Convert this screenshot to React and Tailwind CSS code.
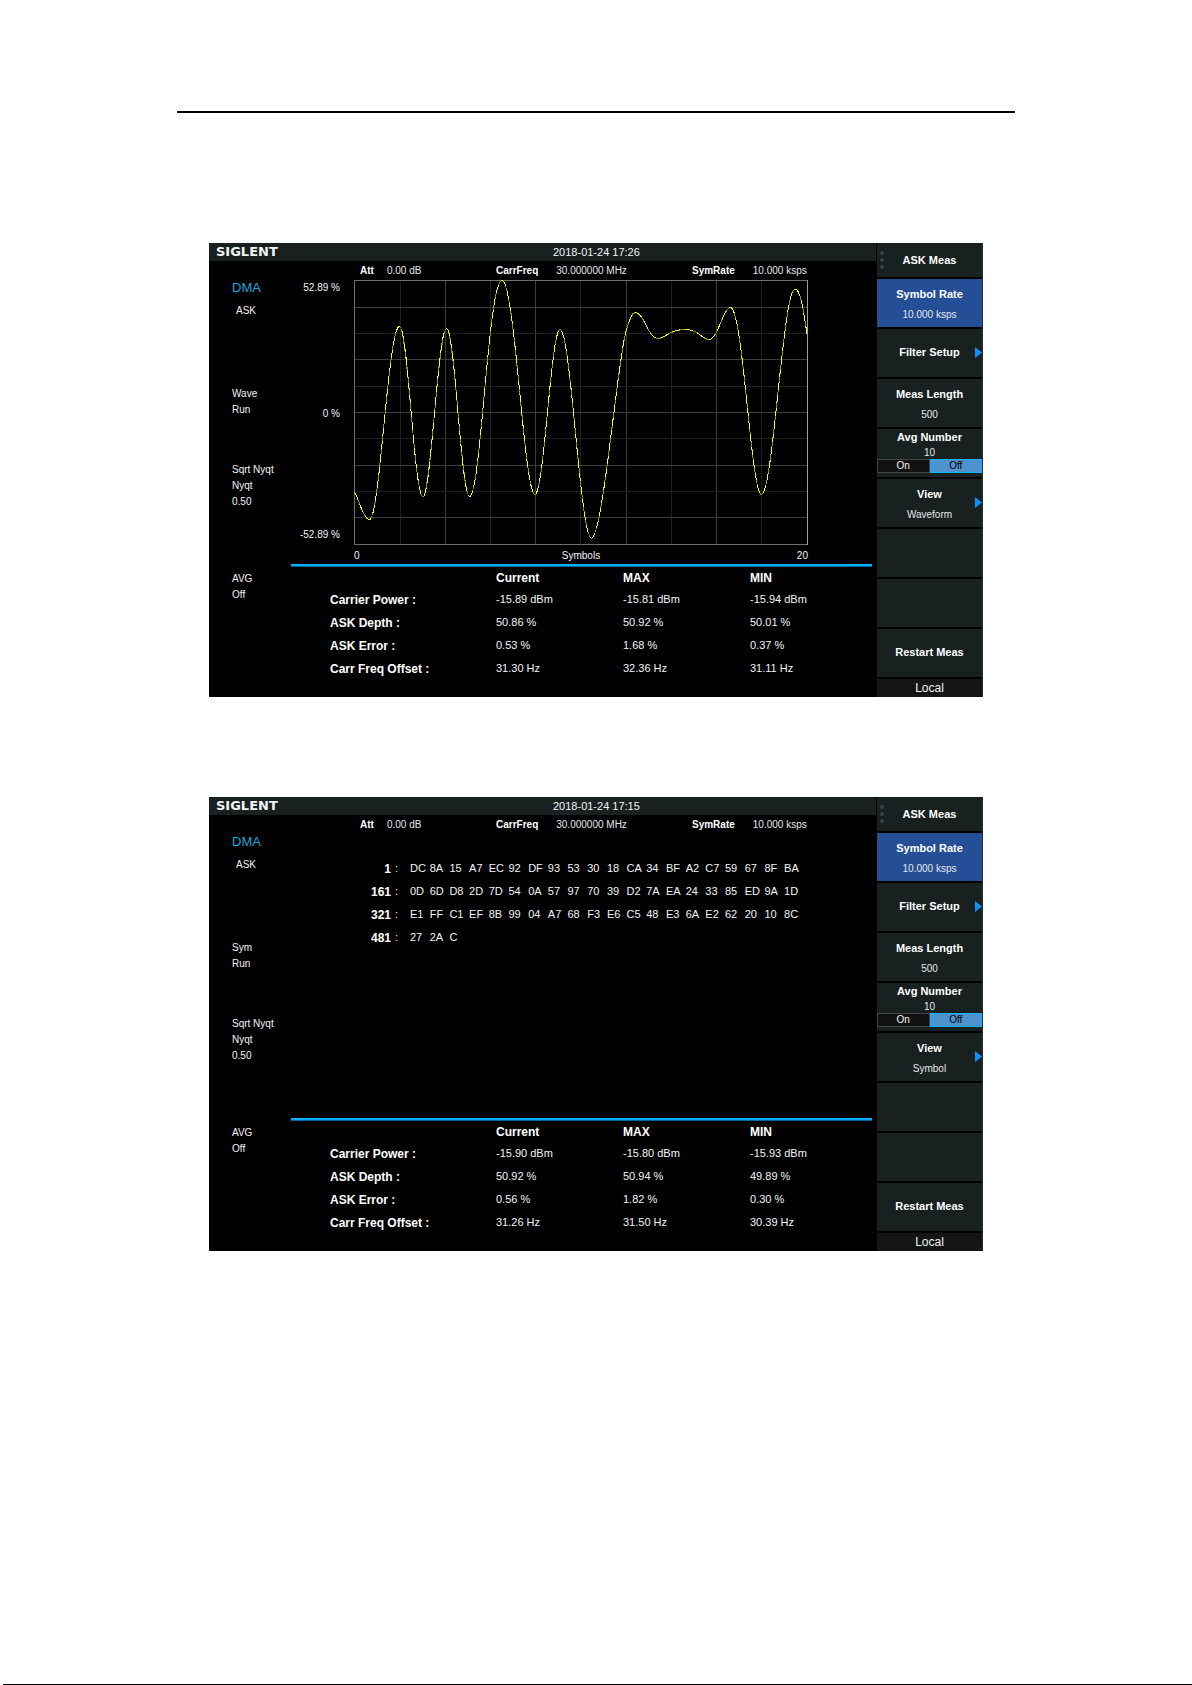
const WAVE =
  "M0.5 212.5 C5 218 9 239.5 15.5 239.5 C26 239.5 34 46.5 45.5 46.5 C54 46.5 60 216.5 69 216.5 C77 216.5 84 48.5 92.5 48.5 C101 48.5 107 216.5 115.5 216.5 C127 216.5 134 0.5 148 0.5 C161 0.5 170 214.5 181 214.5 C190 214.5 197 49.5 206 49.5 C217 49.5 226 258 237.5 258 C249 258 264 72 273 48 C276 38 278 32.5 281.5 32.5 C290 32.5 294 58.5 304 58.5 C311 58.5 315 49.5 331 49.5 C346 49.5 347 59.5 355 59.5 C364 59.5 369 27.5 376.5 27.5 C389 27.5 397 214.5 407.5 214.5 C419 214.5 429 9 441 9 C446 9 449 27 453 54";

const GRID_X = [46, 91, 136, 181, 226, 272, 317, 362, 407];
const GRID_Y = [27, 53, 79, 106, 132, 158, 185, 211, 237];

const CAPTURES = [
  {
    id: "waveform",
    time: "2018-01-24 17:26",
    mode: "Wave",
    view: "Waveform",
    rows: [
      ["Carrier Power :", "-15.89 dBm", "-15.81 dBm", "-15.94 dBm"],
      ["ASK Depth :", "50.86 %", "50.92 %", "50.01 %"],
      ["ASK Error :", "0.53 %", "1.68 %", "0.37 %"],
      ["Carr Freq Offset :", "31.30 Hz", "32.36 Hz", "31.11 Hz"],
    ],
  },
  {
    id: "symbol",
    time: "2018-01-24 17:15",
    mode: "Sym",
    view: "Symbol",
    rows: [
      ["Carrier Power :", "-15.90 dBm", "-15.80 dBm", "-15.93 dBm"],
      ["ASK Depth :", "50.92 %", "50.94 %", "49.89 %"],
      ["ASK Error :", "0.56 %", "1.82 %", "0.30 %"],
      ["Carr Freq Offset :", "31.26 Hz", "31.50 Hz", "30.39 Hz"],
    ],
  },
];

const SYMBOLS = [
  ["1", "DC 8A 15 A7 EC 92 DF 93 53 30 18 CA 34 BF A2 C7 59 67 8F BA"],
  ["161", "0D 6D D8 2D 7D 54 0A 57 97 70 39 D2 7A EA 24 33 85 ED 9A 1D"],
  ["321", "E1 FF C1 EF 8B 99 04 A7 68 F3 E6 C5 48 E3 6A E2 62 20 10 8C"],
  ["481", "27 2A C"],
];

function Status({ mode }) {
  return (
    <div className="flex w-[82px] shrink-0 flex-col pt-[19px] pl-[23px] text-[10px] leading-4 whitespace-nowrap text-gray-100">
      <p className="text-[13px] text-[#1ba6dc]">DMA</p>
      <p className="mt-[7px] pl-1">ASK</p>
      <div className="mt-[67px]">
        <p>{mode}</p>
        <p>Run</p>
      </div>
      <div className="mt-11">
        <p>Sqrt Nyqt</p>
        <p>Nyqt</p>
        <p>0.50</p>
      </div>
      <div className="mt-[61px]">
        <p>AVG</p>
        <p>Off</p>
      </div>
    </div>
  );
}

function Params() {
  return (
    <dl className="grid h-[19px] grid-cols-[136px_196px_1fr] items-center pl-[69px] text-[10px] whitespace-nowrap text-gray-200">
      <div className="flex gap-[13px]">
        <dt className="font-bold text-white">Att</dt>
        <dd>0.00 dB</dd>
      </div>
      <div className="flex gap-[18px]">
        <dt className="font-bold text-white">CarrFreq</dt>
        <dd>30.000000 MHz</dd>
      </div>
      <div className="flex gap-[18px]">
        <dt className="font-bold text-white">SymRate</dt>
        <dd>10.000 ksps</dd>
      </div>
    </dl>
  );
}

function WaveView() {
  return (
    <div className="h-[284px] pr-16 text-[10px] text-gray-100">
      <div className="flex">
        <div className="flex w-[63px] shrink-0 flex-col justify-between pr-[14px] pb-[2px] text-right leading-4">
          <span>52.89 %</span>
          <span className="pt-1">0 %</span>
          <span>-52.89 %</span>
        </div>
        <svg
          className="h-[265px] w-full min-w-0 flex-1"
          viewBox="0 0 454 265"
          preserveAspectRatio="none"
          fill="none"
          shapeRendering="crispEdges"
          role="img"
          aria-label="Demodulated waveform"
        >
          {GRID_X.map((x, i) => (
            <path key={x} d={`M${x + 0.5} 0V265`} stroke={i % 2 ? "#3c3c3c" : "#1f1f1f"} />
          ))}
          {GRID_Y.map((y, i) => (
            <path key={y} d={`M0 ${y + 0.5}H454`} stroke={i % 2 ? "#1f1f1f" : "#3c3c3c"} />
          ))}
          <path d="M0.5 265V0.5H454M0 264.5H454" stroke="#6e6e6e" />
          <path d="M453.5 0V265" stroke="#a0a0a0" />
          <path d={WAVE} stroke="#949400" />
          <path d={WAVE} stroke="#ffff00" strokeDasharray="8 5" />
        </svg>
      </div>
      <div className="ml-[63px] grid h-[19px] grid-cols-3 items-center pt-[2px]">
        <span>0</span>
        <span className="text-center">Symbols</span>
        <span className="text-right">20</span>
      </div>
    </div>
  );
}

function SymbolView() {
  return (
    <div className="h-[284px] pt-[23px] pr-[68px] text-[11px] text-gray-100">
      <table className="w-full table-fixed border-collapse text-left">
        <colgroup>
          <col className="w-[100px]" />
          <col className="w-[19px]" />
          <col span={20} />
        </colgroup>
        <tbody>
          {SYMBOLS.map(([start, codes]) => (
            <tr key={start} className="h-[23px]">
              <th scope="row" className="p-0 text-right text-[12px] font-bold text-white">{start}</th>
              <td className="p-0 pl-1">:</td>
              {codes.split(" ").map((code, i) => (
                <td key={i} className="p-0 whitespace-nowrap">{code}</td>
              ))}
            </tr>
          ))}
        </tbody>
      </table>
    </div>
  );
}

function Results({ rows }) {
  return (
    <table className="w-full table-fixed border-collapse text-left text-[11px] whitespace-nowrap text-gray-100">
      <thead>
        <tr className="h-[21px] text-[12px] text-white">
          <td className="w-[205px] p-0"></td>
          <th scope="col" className="w-[127px] p-0 font-bold">Current</th>
          <th scope="col" className="w-[127px] p-0 font-bold">MAX</th>
          <th scope="col" className="p-0 font-bold">MIN</th>
        </tr>
      </thead>
      <tbody>
        {rows.map(([label, ...values]) => (
          <tr key={label} className="h-[23px]">
            <th scope="row" className="p-0 pl-[39px] text-[12px] font-bold text-white">{label}</th>
            {values.map((v, i) => (
              <td key={i} className="p-0">{v}</td>
            ))}
          </tr>
        ))}
      </tbody>
    </table>
  );
}

function SoftKey({ title, value, active, arrow }) {
  return (
    <button
      type="button"
      className={
        "relative flex h-12 w-full flex-col items-center justify-center gap-[5px] text-[11px] leading-4 " +
        (value ? "pt-[3px] " : "pb-[2px] ") +
        (active ? "bg-[#244f97]" : "bg-[#182020]")
      }
    >
      <span className="font-bold text-white">{title}</span>
      {value && <span className="text-[10px] text-gray-200">{value}</span>}
      {arrow && (
        <svg className="absolute top-[18px] right-0 h-[11px] w-[7px]" viewBox="0 0 7 11" aria-hidden="true">
          <path d="M0 0L7 5.5L0 11Z" fill="#0a94fa" />
        </svg>
      )}
    </button>
  );
}

function Menu({ view }) {
  return (
    <aside className="flex w-[106px] shrink-0 flex-col gap-[2px] border-r border-[#2a2e2e] whitespace-nowrap">
      <div className="relative flex h-[34px] items-center justify-center bg-[#182020]">
        <svg className="absolute top-2 left-[3px] h-[18px] w-1" viewBox="0 0 4 18" fill="#37444a" aria-hidden="true">
          <circle cx="2" cy="2" r="2" />
          <circle cx="2" cy="9" r="2" />
          <circle cx="2" cy="16" r="2" />
        </svg>
        <h2 className="text-[11px] font-bold text-white">ASK Meas</h2>
      </div>
      <SoftKey title="Symbol Rate" value="10.000 ksps" active />
      <SoftKey title="Filter Setup" arrow />
      <SoftKey title="Meas Length" value="500" />
      <div className="flex h-12 flex-col bg-[#182020]">
        <button type="button" className="flex h-[30px] flex-col items-center text-[11px] leading-4">
          <span className="font-bold text-white">Avg Number</span>
          <span className="text-[10px] text-gray-200">10</span>
        </button>
        <div className="grid h-[14px] grid-cols-2 text-[10px] leading-3">
          <button type="button" aria-pressed="false" className="border border-[#454545] bg-[#121212] text-gray-100">On</button>
          <button type="button" aria-pressed="true" className="border border-[#0cb4ff] bg-[#4e92cf] text-black">Off</button>
        </div>
      </div>
      <SoftKey title="View" value={view} arrow />
      <SoftKey />
      <SoftKey />
      <SoftKey title="Restart Meas" />
      <p className="flex h-[18px] items-center justify-center bg-[#151515] text-[12px] text-gray-100">Local</p>
    </aside>
  );
}

function Analyzer({ capture }) {
  return (
    <section className="flex w-full max-w-[774px] bg-black">
      <div className="flex min-w-0 flex-1 flex-col pr-px">
        <header className="grid h-[18px] grid-cols-[344px_1fr] items-center bg-[#182020]">
          <h1 className="pl-[7px] font-['DejaVu_Sans'] text-[13px] leading-4 font-bold text-gray-100">SIGLENT</h1>
          <time className="text-[11px] leading-4 text-gray-100">{capture.time}</time>
        </header>
        <div className="flex flex-1">
          <Status mode={capture.mode} />
          <div className="min-w-0 flex-1 pr-1">
            <Params />
            {capture.id === "waveform" ? <WaveView /> : <SymbolView />}
            <div className="h-[3px] border-b border-[#00689c] bg-[#00aeff]"></div>
            <Results rows={capture.rows} />
          </div>
        </div>
      </div>
      <Menu view={capture.view} />
    </section>
  );
}

export default function App() {
  return (
    <div className="flex min-h-screen flex-col bg-white font-['Liberation_Sans',sans-serif]">
      <main className="mx-auto flex w-full max-w-[838px] flex-1 flex-col items-center pt-[111px]">
        <hr className="w-full border-t-2 border-black" />
        <div className="mt-[130px] flex w-full flex-col items-center gap-[100px]">
          {CAPTURES.map((c) => (
            <Analyzer key={c.id} capture={c} />
          ))}
        </div>
      </main>
      <div className="ml-[3px] h-px bg-black"></div>
    </div>
  );
}
